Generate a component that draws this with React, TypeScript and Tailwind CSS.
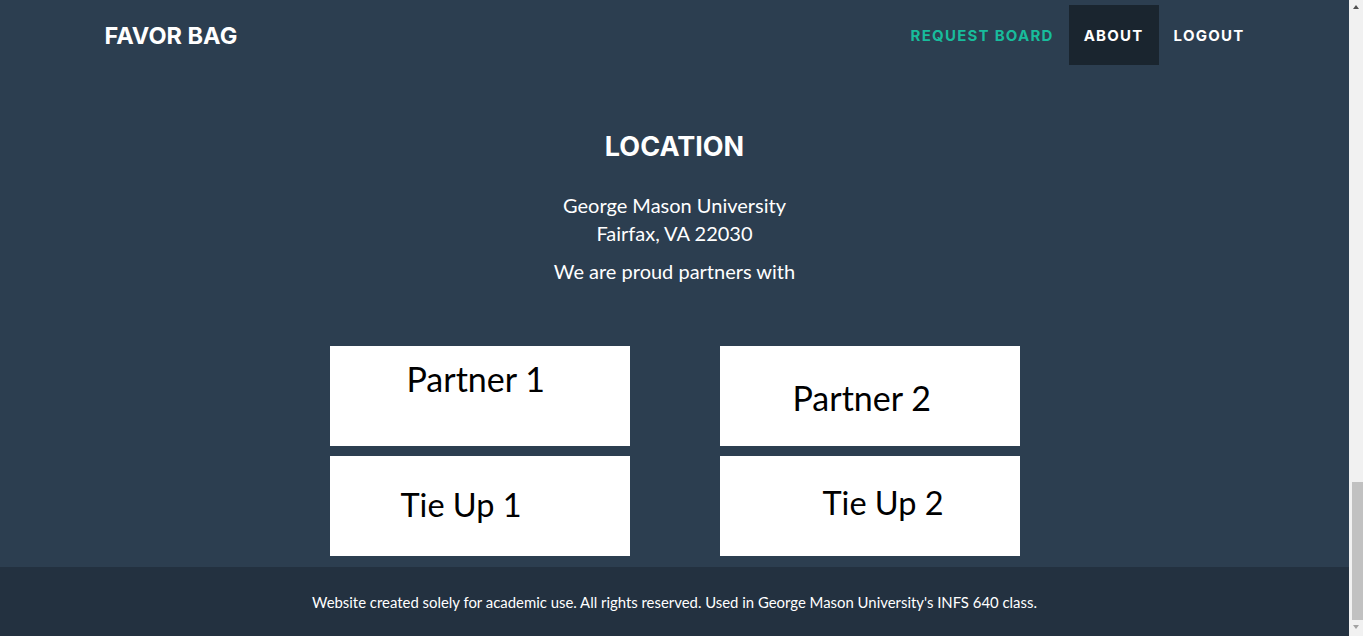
import React from 'react';

const heading = { fontFamily: 'Inter, "DejaVu Sans", sans-serif' };
const body = { fontFamily: 'Lato, "Liberation Sans", sans-serif' };

const Navbar = () => {
  return (
    <nav className="h-[70px] shrink-0">
      <div className="mx-auto flex h-full w-[1170px] items-start justify-between px-[15px]">
        {/* Brand */}
        <a href="#" className="mt-[22px] text-[23.5px] font-bold uppercase leading-[28px] text-white" style={heading}>
          Favor Bag
        </a>

        {/* Menu */}
        <ul className="mr-[-15px] mt-[5px] flex items-stretch text-[15px] font-bold uppercase tracking-[1.25px]" style={heading}>
          <li>
            <a href="#" className="flex h-[60px] items-center px-[15px] pt-[2px] text-[#18bc9c]">Request Board</a>
          </li>
          <li>
            <a href="#" className="flex h-[60px] items-center bg-[#1a252f] px-[15px] pt-[2px] text-white">About</a>
          </li>
          <li>
            <a href="#" className="flex h-[60px] items-center px-[15px] pt-[2px] text-white">Logout</a>
          </li>
        </ul>
      </div>
    </nav>
  );
};

const LogoBox = ({ label, className }: { label: string; className: string }) => {
  return (
    <div className="h-[100px] w-[300px] bg-white">
      <div className={`leading-[40px] text-black ${className}`} style={body}>
        {label}
      </div>
    </div>
  );
};

const About = () => {
  return (
    <section className="flex flex-col items-center pt-[62px] text-white">
      <h2 className="text-[27px] font-bold uppercase leading-[30px]" style={heading}>
        Location
      </h2>
      <div className="mt-[29px] text-center text-[20px] leading-[28px]" style={body}>
        <p>George Mason University</p>
        <p>Fairfax, VA 22030</p>
        <p className="mt-[10px]">We are proud partners with</p>
      </div>

      {/* Partner logos */}
      <div className="mt-[61px] grid grid-cols-2 gap-x-[90px] gap-y-[10px]">
        <LogoBox label="Partner 1" className="pl-[77px] pt-[13px] text-[34px]" />
        <LogoBox label="Partner 2" className="pl-[73px] pt-[32px] text-[34px]" />
        <LogoBox label="Tie Up 1" className="pl-[71px] pt-[29px] text-[32.5px]" />
        <LogoBox label="Tie Up 2" className="pl-[103px] pt-[27px] text-[32.5px]" />
      </div>
    </section>
  );
};

const Footer = () => {
  return (
    <footer className="mt-auto flex h-[69px] shrink-0 items-center justify-center bg-[#233140]">
      <p className="pt-[1px] text-[14.9px] text-white" style={body}>
        Website created solely for academic use. All rights reserved. Used in George Mason University's INFS 640 class.
      </p>
    </footer>
  );
};

const Scrollbar = () => {
  return (
    <div className="flex w-[14px] shrink-0 flex-col items-center bg-[#f1f1f1]">
      <svg width="14" height="14" viewBox="0 0 14 14" className="shrink-0">
        <path d="M4 9 L7 5 L10 9 Z" fill="#505050" />
      </svg>
      <div className="flex-1" />
      <div className="h-[138px] w-[11px] translate-x-[1px] bg-[#c1c1c1]" />
      <svg width="14" height="16" viewBox="0 0 14 16" className="shrink-0">
        <path d="M4 5 L7 9 L10 5 Z" fill="#a3a3a3" />
      </svg>
    </div>
  );
};

export default function App() {
  return (
    <div className="flex h-[636px] w-full overflow-hidden">
      <div className="flex min-w-0 flex-1 flex-col bg-[#2c3e50]">
        <Navbar />
        <About />
        <Footer />
      </div>
      <Scrollbar />
    </div>
  );
}
